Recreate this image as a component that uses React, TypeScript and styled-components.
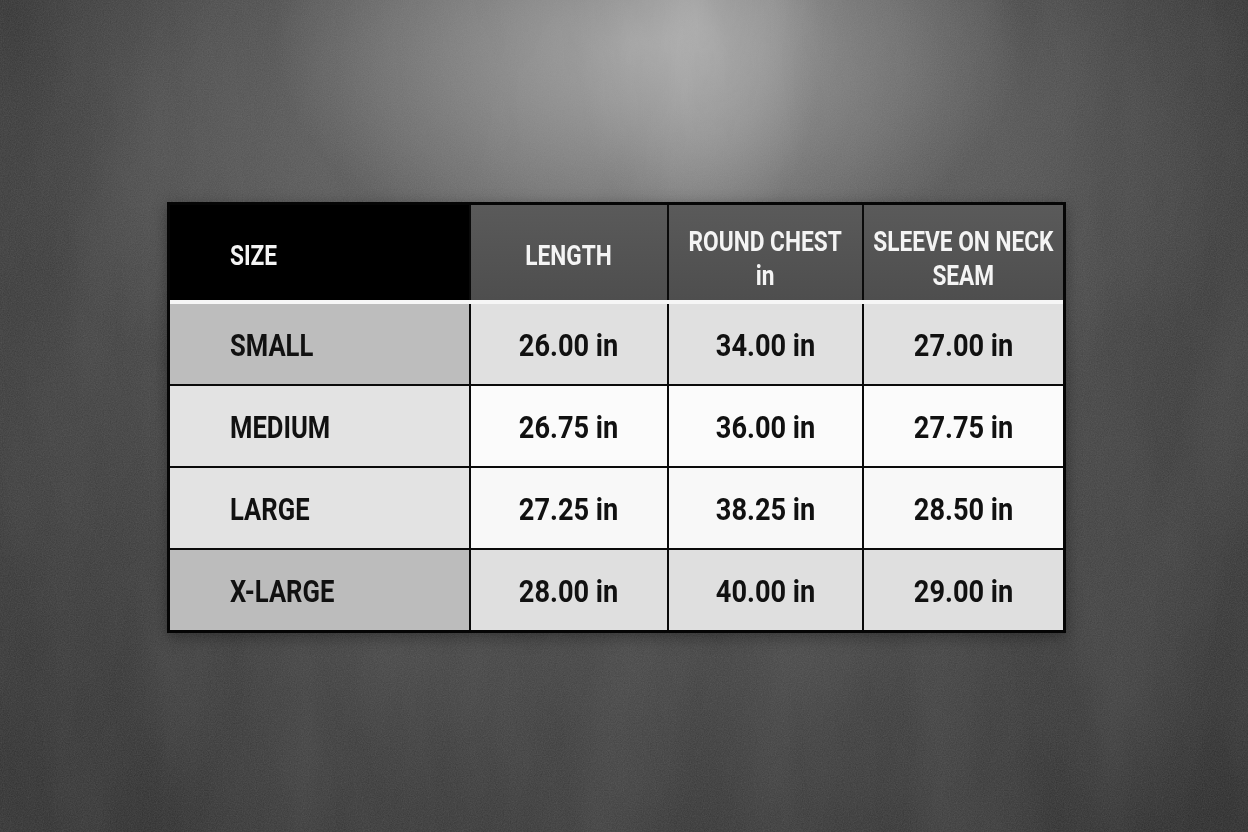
import React from "react";
import styled, { createGlobalStyle } from "styled-components";

const GlobalStyle = createGlobalStyle`
  html, body {
    margin: 0;
    padding: 0;
    background: #3a3a3a;
  }
  * {
    box-sizing: border-box;
  }
`;

const noise =
  "data:image/svg+xml;utf8," +
  encodeURIComponent(
    `<svg xmlns='http://www.w3.org/2000/svg' width='400' height='400'><filter id='n'><feTurbulence type='fractalNoise' baseFrequency='0.85' numOctaves='3' stitchTiles='stitch'/><feColorMatrix values='0 0 0 0 0.4  0 0 0 0 0.4  0 0 0 0 0.4  0 0 0 0.22 0'/></filter><rect width='100%' height='100%' filter='url(#n)'/></svg>`
  );

const streaks =
  "data:image/svg+xml;utf8," +
  encodeURIComponent(
    `<svg xmlns='http://www.w3.org/2000/svg' width='1248' height='832'><filter id='m'><feTurbulence type='fractalNoise' baseFrequency='0.012 0.004' numOctaves='4' seed='4'/><feColorMatrix values='0 0 0 0 0.15  0 0 0 0 0.15  0 0 0 0 0.15  0 0 0 0.3 -0.08'/></filter><rect width='100%' height='100%' filter='url(#m)'/></svg>`
  );

const Page = styled.main`
  width: 1248px;
  height: 832px;
  overflow: hidden;
  padding: 202px 0 0 167px;
  font-family: Roboto, "Liberation Sans", sans-serif;
  background:
    url("${noise}"),
    url("${streaks}"),
    radial-gradient(ellipse 10% 28% at 56% 3%, rgba(205, 205, 205, 0.4), rgba(205, 205, 205, 0) 100%),
    radial-gradient(ellipse 30% 28% at 52% 5%, rgba(175, 175, 175, 0.85), rgba(175, 175, 175, 0) 100%),
    radial-gradient(ellipse 52% 45% at 50% 12%, rgba(125, 125, 125, 0.75), rgba(125, 125, 125, 0) 100%),
    radial-gradient(ellipse 70% 75% at 50% 42%, #4c4c4c 0%, #404040 55%, #2c2c2c 100%);
`;

const Frame = styled.section`
  width: 899px;
  border: 3px solid #050505;
  background: #0a0a0a;
  box-shadow: 0 4px 14px rgba(0, 0, 0, 0.35);
`;

const Grid = styled.div<{ $head?: boolean }>`
  display: grid;
  grid-template-columns: 299px 196px 193px 199px;
  grid-auto-rows: ${({ $head }) => ($head ? "95px" : "80px")};
  gap: 2px;
  background: #0a0a0a;
`;

const Divider = styled.div`
  height: 4px;
  background: #f6f6f6;
`;

const HeadCell = styled.div<{ $first?: boolean; $tall?: boolean }>`
  display: flex;
  align-items: center;
  justify-content: ${({ $first }) => ($first ? "flex-start" : "center")};
  padding-left: ${({ $first }) => ($first ? "60px" : "0")};
  padding-top: ${({ $tall }) => ($tall ? "12px" : "7px")};
  text-align: center;
  color: #f4f4f4;
  font-size: 27px;
  font-weight: 700;
  line-height: 34px;
  background: ${({ $first }) =>
    $first ? "#000" : "linear-gradient(180deg, #5a5a5a 0%, #4e4e4e 100%)"};
`;

const Cell = styled.div<{ $tone: string; $first?: boolean }>`
  display: flex;
  align-items: center;
  justify-content: ${({ $first }) => ($first ? "flex-start" : "center")};
  padding-left: ${({ $first }) => ($first ? "60px" : "0")};
  padding-top: 2px;
  color: #111;
  font-size: 32px;
  font-weight: 700;
  background: ${({ $tone }) => $tone};
`;

const Narrow = styled.span<{ $left?: boolean; $scale?: number }>`
  display: inline-block;
  white-space: nowrap;
  transform: scaleX(${({ $scale }) => $scale ?? 0.84});
  transform-origin: ${({ $left }) => ($left ? "left center" : "center")};
`;

const headers = [["LENGTH"], ["ROUND CHEST", "in"], ["SLEEVE ON NECK", "SEAM"]];

const rows = [
  { size: "SMALL", vals: ["26.00 in", "34.00 in", "27.00 in"], side: "#bdbdbd", tone: "#e0e0e0" },
  { size: "MEDIUM", vals: ["26.75 in", "36.00 in", "27.75 in"], side: "#e3e3e3", tone: "#fbfbfb" },
  { size: "LARGE", vals: ["27.25 in", "38.25 in", "28.50 in"], side: "#e3e3e3", tone: "#f8f8f8" },
  { size: "X-LARGE", vals: ["28.00 in", "40.00 in", "29.00 in"], side: "#bcbcbc", tone: "#dfdfdf" },
];

export default function App() {
  return (
    <>
      <GlobalStyle />
      <Page>
        <Frame>
          <Grid $head>
            <HeadCell $first>
              <Narrow $left>SIZE</Narrow>
            </HeadCell>
            {headers.map((h) => (
              <HeadCell key={h[0]} $tall={h.length > 1}>
                <Narrow>
                  {h.map((line, i) => (
                    <React.Fragment key={line}>
                      {i > 0 && <br />}
                      {line}
                    </React.Fragment>
                  ))}
                </Narrow>
              </HeadCell>
            ))}
          </Grid>
          <Divider />
          <Grid>
            {rows.map((r) => (
              <React.Fragment key={r.size}>
                <Cell $first $tone={r.side}>
                  <Narrow $left $scale={0.8}>
                    {r.size}
                  </Narrow>
                </Cell>
                {r.vals.map((v, i) => (
                  <Cell key={i} $tone={r.tone}>
                    <Narrow $scale={0.85}>{v}</Narrow>
                  </Cell>
                ))}
              </React.Fragment>
            ))}
          </Grid>
        </Frame>
      </Page>
    </>
  );
}
